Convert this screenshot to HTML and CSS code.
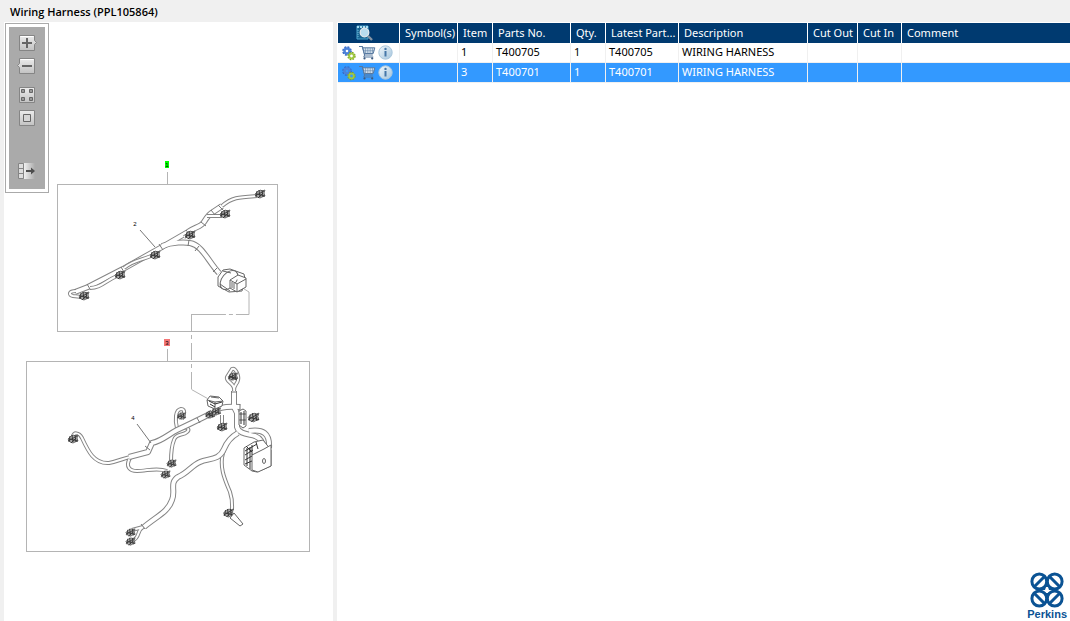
FILE: index.html
```html
<!DOCTYPE html>
<html lang="en">
<head>
<meta charset="utf-8">
<title>Wiring Harness (PPL105864)</title>
<link rel="stylesheet" href="styles.css">
</head>
<body>
<svg class="sprite" aria-hidden="true">
  <defs>
    <linearGradient id="face" x1="0" y1="0" x2="0" y2="1"><stop offset="0" stop-color="#ececec"/><stop offset="1" stop-color="#c2c2c2"/></linearGradient>
    <linearGradient id="fade" x1="0" y1="0" x2="1" y2="0"><stop offset="0" stop-color="#f0f0f0"/><stop offset="1" stop-color="#aaaaaa"/></linearGradient>
    <linearGradient id="glass" x1="0" y1="0" x2="1" y2="1"><stop offset="0" stop-color="#f2f8fc"/><stop offset="1" stop-color="#a3c4dc"/></linearGradient>
    <symbol id="gears" viewBox="0 0 16 16">
      <circle cx="6" cy="6" r="3.5" fill="none" stroke="#3569c5" stroke-width="2.6" stroke-dasharray="1.7 1.05"/>
      <circle cx="6" cy="6" r="2.5" fill="none" stroke="#4c82da" stroke-width="2.4"/>
      <circle cx="10.500" cy="11" r="3.100" fill="none" stroke="#7fa526" stroke-width="2.200" stroke-dasharray="1.5 .93"/>
      <circle cx="10.500" cy="11" r="2.300" fill="none" stroke="#a0c83e" stroke-width="1.800"/>
    </symbol>
    <symbol id="cart" viewBox="0 0 17 16">
      <path d="M0 1.500h3.300L5.600 10h8.200" fill="none" stroke="#56789f" stroke-width="1.200"/>
      <path d="M3.800 2.800h12L14.200 8.500H5.300z" fill="#d3e0ec" stroke="#56789f"/>
      <path d="M6.500 3v5.600M8.800 3v5.600M11.200 3v5.600M13.500 3v5.600M4.500 5.700h10.800" stroke="#6888ab" stroke-width=".6"/>
      <path d="M5.600 10l-.8 2h9.500" fill="none" stroke="#56789f"/>
      <circle cx="5.500" cy="13.400" r="1.100" fill="#3c5a80"/><circle cx="13.200" cy="13.400" r="1.100" fill="#3c5a80"/>
    </symbol>
    <symbol id="info" viewBox="0 0 15 15">
      <circle cx="7.500" cy="7.500" r="6.700" fill="url(#glass)" stroke="#a9c6dc"/>
      <path d="M7.500 6v5.500" fill="none" stroke="#4577a8" stroke-width="2"/><circle cx="7.500" cy="3.900" r="1.200" fill="#4577a8"/>
    </symbol>
    <symbol id="plug" viewBox="-6 -6 12 12" overflow="visible">
      <path d="M-5 0l3-3 3-1 1 1 3-1-1 3 1 3-3 1-2 1-3-1z" fill="#aaa" stroke="#555" stroke-width=".8"/>
      <path d="M-5 2L4-3M-4 3l1-6M-1-4l1 7M-3 0L5 2M2-4l1 7M-2 4L3-1" fill="none" stroke="#333" stroke-width=".9"/>
    </symbol>
  </defs>
</svg>
<div class="app">
  <h1 class="title">Wiring Harness (PPL105864)</h1>
  <main class="panes">
    <section class="drawing" aria-label="Parts drawing">
      <svg class="sheet" viewBox="4 22 329 599" role="img" aria-label="Wiring harness illustration">
        <defs>
          <g id="upper-wide">
            <path d="M75 292L88 287 123 269 162 247 188 232C195 227 201 227 204 222 207 217 209 214 213 212L222 206"/>
            <path d="M162 246C173 242 185 242 190 243 202 245 208 261 219 273"/>
          </g>
          <g id="upper-thin">
            <path d="M222 206C232 197 240 197 257 196"/><path d="M207 216h15"/><path d="M184 237l6-3"/>
            <path d="M124 268C134 260 139 261 151 256"/><path d="M90 288C101 288 105 281 117 276"/>
            <path d="M76 291C69 291 68 295 73 296L82 297"/>
          </g>
          <g id="lower-wide">
            <path d="M129 457L148 452 152 443C162 441 169 434 177 430 190 424 200 419 212 413"/>
            <path d="M214 411C219 407 228 406 240 407"/>
            <path d="M234 391L234 407 237 413 237 427C239 434 248 434 255 436 261 438 264 445 265 452"/>
            <path d="M249 431C263 429 270 433 269 448"/>
            <path d="M238 433C229 438 226 444 224 449 219 461 208 458 200 462 191 466 188 473 178 477 169 483 176 491 172 500 168 512 157 516 144 527"/>
          </g>
          <g id="lower-thin">
            <path d="M73 437C73 432 79 432 82 438 88 451 94 464 109 463 119 461 124 458 134 456"/>
            <path d="M130 458C125 467 130 471 137 471 147 471 157 467 167 471"/>
            <path d="M177 428C175 420 175 410 181 409 186 409 184 415 182 419"/>
            <path d="M176 430C183 425 192 428 187 432 183 436 176 433 174 440 171 447 171 455 171 462"/>
            <path d="M237 433C228 439 226 444 223 453 219 467 225 480 230 492 233 501 232 504 232 510"/>
            <path d="M234 391C236 383 225 382 227 377L232 369C236 367 239 377 238 380 237 385 234 384 234 391"/>
            <path d="M222 423v-8"/><path d="M143 527L132 530"/><path d="M143 527C136 531 141 537 132 541"/>
          </g>
        </defs>
        <g class="frame">
          <rect x="57.500" y="184.500" width="220" height="147"/><path d="M167.500 172v12"/>
          <rect x="26.500" y="361.500" width="283" height="190"/><path d="M167.500 349v12"/>
          <path d="M241 287l8 5v22.500h-58" stroke-dasharray="45 3 4 3"/><path d="M191.500 314V390" stroke-dasharray="17 4 4 4"/><path d="M191.500 389.500l16 9"/>
        </g>
        <use href="#upper-wide" class="edge wide"/><use href="#upper-wide" class="core wide"/>
        <use href="#upper-thin" class="edge thin"/><use href="#upper-thin" class="core thin"/>
        <use href="#lower-thin" class="edge thin"/><use href="#lower-thin" class="core thin"/>
        <use href="#lower-wide" class="edge wide"/><use href="#lower-wide" class="core wide"/>
        <g class="ink">
          <path d="M140 230l15 17M137 424l14 19M121 267l3 5M159 244l4 6M186 230l4 5M201 222l5 4M211 210l4 5M218 205l5 5M87 284l3 5M189 240l-1 6M199 246l-4 5M217 268l-4 4M150 450l-5-4M141 524l4 5M197 418l3 5M231 392h6M240 404v6"/>
        </g>
        <g>
          <use href="#plug" x="254" y="188" width="12" height="12"/><use href="#plug" x="219" y="208" width="12" height="12"/>
          <use href="#plug" x="184" y="229" width="12" height="12"/><use href="#plug" x="149" y="249" width="12" height="12"/>
          <use href="#plug" x="114" y="269" width="12" height="12"/><use href="#plug" x="78" y="290" width="12" height="12"/>
          <use href="#plug" x="67" y="433" width="12" height="12"/><use href="#plug" x="160" y="469" width="11" height="11"/>
          <use href="#plug" x="166" y="458" width="11" height="11"/><use href="#plug" x="176" y="411" width="11" height="10"/>
          <use href="#plug" x="216" y="421" width="12" height="12"/><use href="#plug" x="227" y="371" width="12" height="11"/>
          <use href="#plug" x="125" y="527" width="11" height="11"/><use href="#plug" x="125" y="536" width="11" height="11"/>
          <use href="#plug" x="222" y="507" width="13" height="12"/><use href="#plug" x="247" y="411" width="13" height="13"/>
          <use href="#plug" x="204" y="409" width="12" height="11"/><use href="#plug" x="210" y="406" width="12" height="11"/>
        </g>
        <g class="part">
          <path d="M218 277l5-7 7-1 14 5 1 5-3 12-13 1-11-6z"/><ellipse cx="229" cy="280" rx="7" ry="11" transform="rotate(40 229 280)"/>
          <path d="M230 280l8-5 8 3v9l-9 5-7-4zM230 280l7 4 9-5M237 284v8M232 282v6M234 283v6M223 271l8 2M220 284l10 7"/>
          <path d="M207 400l3-4 9 1 4 4-1 5-7 3-7-3zM207 400l8 2 8-1M215 402v7M211 397l8 1"/>
          <path d="M239 411l4-2 3 2v15l-3 2-4-3zM239 414h7M239 420h7"/>
          <path d="M244 448l10-6 9-2 8 10v16l-14 6-5-1-8-6z"/><path d="M252 455l12-6 7-4v21l-13 6-6-2z"/>
          <path d="M234 513l9 11-3 2-10-8z"/><ellipse cx="264" cy="461" rx="1.500" ry="2.500"/>
        </g>
        <g class="pins"><path d="M245 451l12-7M245 455l8-5M245 460l7-4M245 464l7-3M247 448v18M250 447v22M252 445v10M246 446l6 6M256 442l2 7M209 401l6 3 7-2M210 404l5 3M241 412v12M244 411v14M229 376l8 4M208 413l5 4"/></g>
        <rect x="165" y="161" width="4" height="7" fill="#00ff00"/><rect x="164" y="339" width="6" height="7" fill="#f47777"/>
        <g class="callout"><text x="167" y="167">1</text><text x="167" y="345">3</text><text x="135" y="226">2</text><text x="133" y="420">4</text></g>
      </svg>
      <div class="toolbar" role="toolbar" aria-label="Zoom">
        <button class="tool" type="button" aria-label="Zoom in"><svg viewBox="0 0 20 16"><path d="M2.500.5h15v5l2 2-2 2v6h-15z" fill="url(#face)" stroke="#858585"/><path d="M3.500 1.500h13" stroke="#fff"/><path d="M10 3v10M5 8h10" stroke="#666" stroke-width="2"/></svg></button>
        <button class="tool" type="button" aria-label="Zoom out"><svg viewBox="0 0 20 16"><path d="M2.500.5h15v15h-15v-6l-2-2 2-2z" fill="url(#face)" stroke="#858585"/><path d="M3.500 1.500h13" stroke="#fff"/><path d="M5 8h10" stroke="#666" stroke-width="2"/></svg></button>
        <button class="tool group" type="button" aria-label="Fit page"><svg viewBox="0 0 20 16"><path d="M2.500.5h15v15h-15z" fill="url(#face)" stroke="#858585"/><path d="M4.500 2.500h3v3h-3zM12.500 2.500h3v3h-3zM4.500 10.500h3v3h-3zM12.500 10.500h3v3h-3z" fill="#999" stroke="#666"/></svg></button>
        <button class="tool" type="button" aria-label="Actual size"><svg viewBox="0 0 20 16"><path d="M2.500.5h15v15h-15z" fill="url(#face)" stroke="#858585"/><path d="M6.500 4.500h7v7h-7z" fill="#d6d6d6" stroke="#666"/></svg></button>
        <button class="tool last" type="button" aria-label="Hide list"><svg viewBox="0 0 20 16"><path d="M7 0h11v16H7z" fill="url(#fade)"/><path d="M1.500.5h5v15h-5zM1.500 5.500h5M1.500 10.500h5" fill="#ddd" stroke="#858585"/><path d="M9 8h6" stroke="#4d4d4d" stroke-width="2"/><path d="M14 4.500l4 3.500-4 3.500z" fill="#4d4d4d"/></svg></button>
      </div>
    </section>
    <section class="list" aria-label="Parts list">
      <table class="parts">
        <colgroup><col class="c-actions"><col class="c-symbol"><col class="c-small"><col class="c-number"><col class="c-small"><col class="c-latest"><col class="c-description"><col class="c-out"><col class="c-in"><col></colgroup>
        <thead>
          <tr>
            <th class="center"><button class="icon" type="button" aria-label="Search list"><svg width="17" height="16" viewBox="0 0 17 16"><path d="M1 1h11v13H1z" fill="#176391" stroke="#4ba4cc"/><path d="M1 2h11" stroke="#a7dcf2" stroke-width="2" stroke-dasharray="2 1"/><path d="M2 5v8" stroke="#75b9da" stroke-dasharray="1 1"/><circle cx="8.500" cy="7.500" r="4.300" fill="#b8dcee" stroke="#e3e8ec" stroke-width="1.300"/><path d="M12 11l4 4" stroke="#8795a4" stroke-width="2.400"/></svg></button></th>
            <th>Symbol(s)</th><th>Item</th><th>Parts No.</th><th>Qty.</th><th>Latest Part...</th><th>Description</th><th>Cut Out</th><th>Cut In</th><th>Comment</th>
          </tr>
        </thead>
        <tbody>
          <tr>
            <td><div class="actions"><button class="icon" type="button" aria-label="Options"><svg width="16" height="16"><use href="#gears"/></svg></button><button class="icon" type="button" aria-label="Add to cart"><svg width="17" height="16"><use href="#cart"/></svg></button><button class="icon" type="button" aria-label="Information"><svg width="15" height="15"><use href="#info"/></svg></button></div></td>
            <td></td><td>1</td><td>T400705</td><td>1</td><td>T400705</td><td>WIRING HARNESS</td><td></td><td></td><td></td>
          </tr>
          <tr class="selected" aria-selected="true">
            <td><div class="actions"><button class="icon" type="button" aria-label="Options"><svg width="16" height="16"><use href="#gears"/></svg></button><button class="icon" type="button" aria-label="Add to cart"><svg width="17" height="16"><use href="#cart"/></svg></button><button class="icon" type="button" aria-label="Information"><svg width="15" height="15"><use href="#info"/></svg></button></div></td>
            <td></td><td>3</td><td>T400701</td><td>1</td><td>T400701</td><td>WIRING HARNESS</td><td></td><td></td><td></td>
          </tr>
        </tbody>
      </table>
      <div class="brand">
        <svg width="34" height="36" viewBox="0 0 34 36" aria-hidden="true">
          <g fill="none" stroke="#0b5394" stroke-width="3">
            <ellipse cx="9.300" cy="9.500" rx="7.400" ry="7.600"/><ellipse cx="24.700" cy="9.500" rx="7.400" ry="7.600"/><ellipse cx="9.300" cy="26.500" rx="7.400" ry="7.600"/><ellipse cx="24.700" cy="26.500" rx="7.400" ry="7.600"/>
            <path d="M4 15L15 4M30 15L19 4M4 21l11 11M30 21l-11 11"/>
            <path d="M12 17h10M17 12v3M17 21v3" stroke-width="2"/>
          </g>
          <ellipse cx="17" cy="18" rx="2" ry="2.500" fill="#fff"/>
        </svg>
        <span class="brand-name">Perkins</span>
      </div>
    </section>
  </main>
</div>
</body>
</html>
```
FILE: styles.css
```css
* { box-sizing: border-box; }

body {
  margin: 0;
  background: #f0f0f0;
  color: #000;
  font: 11px/14px "Noto Sans", "Open Sans", sans-serif;
}

.sprite { position: absolute; width: 0; height: 0; }

.app { display: flex; flex-direction: column; min-height: 100vh; }

.title {
  margin: 0;
  padding: 4px 10px 2px;
  font: 600 11px/16px "Open Sans", "Noto Sans", sans-serif;
}

.panes {
  flex: 1;
  display: grid;
  grid-template-columns: 329px minmax(0, 1fr);
  column-gap: 4px;
  padding-left: 4px;
}

.drawing { position: relative; background: #fff; }
.sheet { display: block; width: 100%; }

.frame { fill: none; stroke: #b4b4b4; }
.edge, .core { fill: none; stroke-linejoin: round; }
.edge { stroke: #858585; }
.core { stroke: #fff; }
.edge.wide { stroke-width: 6; }
.core.wide { stroke-width: 4; }
.edge.thin { stroke-width: 4; }
.core.thin { stroke-width: 2; }
.ink { fill: none; stroke: #777; }
.part { fill: #fff; stroke: #666; }
.pins { fill: none; stroke: #333; }
.callout { font: 6px "Liberation Sans", sans-serif; text-anchor: middle; }

.toolbar {
  position: absolute;
  top: 1px;
  left: 1px;
  display: flex;
  flex-direction: column;
  align-items: center;
  gap: 7px;
  width: 44px;
  padding: 11px 0 13px;
  border: 1px solid #aaa;
  background: #aaa;
  box-shadow: inset 0 0 0 3px #fff;
}

.tool {
  width: 20px;
  height: 16px;
  padding: 0;
  border: 0;
  background: none;
}
.tool svg { display: block; width: 20px; height: 16px; }
.tool.group { margin-top: 6px; }
.tool.last { margin-top: 30px; }

.list {
  display: flex;
  flex-direction: column;
  padding: 1px 0 0 1px;
  background: #fff;
}

.parts {
  width: 100%;
  table-layout: fixed;
  border-collapse: separate;
  border-spacing: 0;
}
.c-actions { width: 62px; }
.c-symbol { width: 58px; }
.c-small { width: 35px; }
.c-number { width: 78px; }
.c-latest { width: 73px; }
.c-description { width: 129px; }
.c-out { width: 50px; }
.c-in { width: 44px; }

.parts th, .parts td {
  height: 20px;
  padding: 0 0 2px 3px;
  border-right: 1px solid #f0f0f0;
  border-bottom: 1px solid #f0f0f0;
  text-align: left;
  white-space: nowrap;
}
.parts th {
  padding: 0 0 0 5px;
  border-right-color: #fff;
  border-bottom: 0;
  background: #003a70;
  color: #fff;
  font-weight: normal;
}
.parts th.center { padding: 0 9px 0 0; text-align: center; }
.parts td:first-child { padding-bottom: 0; }
.parts th:last-child, .parts td:last-child { border-right: 0; }
.parts .selected td { background: #39f; color: #fff; }

.actions { display: flex; align-items: center; gap: 2px; }
.icon {
  padding: 0;
  border: 0;
  background: none;
  vertical-align: middle;
}
.icon svg { display: block; }

.brand {
  display: flex;
  flex-direction: column;
  align-items: center;
  align-self: flex-end;
  margin-top: auto;
  padding-right: 3px;
  color: #0b5394;
}
.brand-name { font: bold 11px/13px "Liberation Sans", sans-serif; }
```
